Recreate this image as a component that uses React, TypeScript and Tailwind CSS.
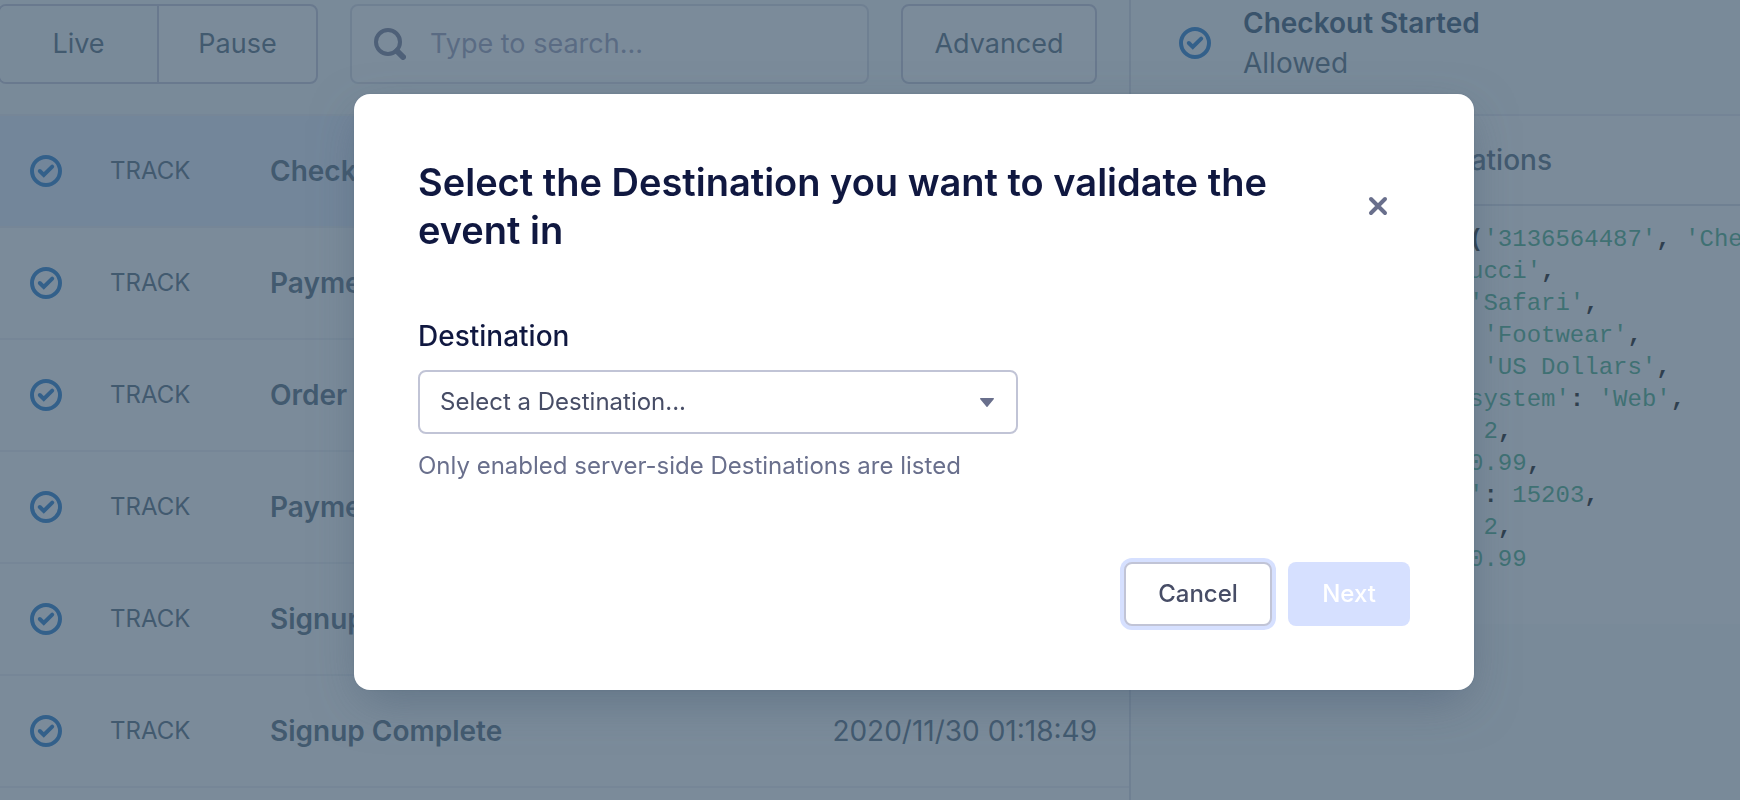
import React, { useState } from 'react';

interface TrackEvent {
  id: number;
  name: string;
  time: string;
}

const EVENTS: TrackEvent[] = [
  { id: 1, name: 'Checkout Started', time: '2020/11/30 01:18:54' },
  { id: 2, name: 'Payment Info Entered', time: '2020/11/30 01:18:53' },
  { id: 3, name: 'Order Completed', time: '2020/11/30 01:18:52' },
  { id: 4, name: 'Payment Info Entered', time: '2020/11/30 01:18:51' },
  { id: 5, name: 'Signup Started', time: '2020/11/30 01:18:50' },
  { id: 6, name: 'Signup Complete', time: '2020/11/30 01:18:49' },
];

const CODE = `analytics.track('3136564487', 'Checkout Started', {
      brand: 'Gucci',
      browser: 'Safari',
      category: 'Footwear',
      currency: 'US Dollars',
      'browser system': 'Web',
      quantity: 2,
      price: 190.99,
      'zip code': 15203,
      discount: 2,
      total: 190.99
});`;

// Splits the snippet into strings, numbers and everything else
const tokenize = (code: string) => code.split(/('[^']*'|\b\d+(?:\.\d+)?\b)/g);

const CheckIcon: React.FC = () => (
  <svg viewBox="0 0 32 32" className="w-8 h-8 shrink-0 text-[#1070ca]" fill="none" stroke="currentColor">
    <circle cx="16" cy="16" r="14" strokeWidth="4" />
    <path d="M9.8 16l4 4 8.400-8.400" strokeWidth="4" strokeLinecap="round" />
  </svg>
);

const SearchIcon: React.FC = () => (
  <svg viewBox="0 0 32 32" className="w-8 h-8 shrink-0 text-[#696f8c]" fill="none" stroke="currentColor">
    <circle cx="14" cy="14" r="12" strokeWidth="4" />
    <path d="M23 23l6 6" strokeWidth="6" strokeLinecap="round" />
  </svg>
);

const CloseIcon: React.FC = () => (
  <svg viewBox="0 0 20 20" className="w-5 h-5" fill="none" stroke="currentColor" strokeWidth="4" strokeLinecap="round">
    <path d="M3 3l14 14M17 3l-14 14" />
  </svg>
);

const Toolbar: React.FC = () => {
  const [query, setQuery] = useState('');

  return (
    <div className="flex gap-8 h-[116px] pt-1 pr-8 border-b-2 border-[#edeff5] bg-[#f9fafc] text-[27px] text-[#425a70]">
      <div className="flex w-80 h-20 -ml-[2px] rounded-lg border-2 border-[#c1c4d6] bg-white overflow-hidden">
        <button type="button" className="flex-1 bg-[#f9fafc] border-r-2 border-[#c1c4d6]">
          Live
        </button>
        <button type="button" className="flex-1">
          Pause
        </button>
      </div>
      <label className="flex flex-1 items-center gap-6 h-20 px-[22px] rounded-lg border-2 border-[#d8dae5] bg-white">
        <SearchIcon />
        <input
          type="text"
          aria-label="Search events"
          value={query}
          onChange={(e) => setQuery(e.target.value)}
          placeholder="Type to search..."
          className="w-full min-w-0 bg-transparent outline-none placeholder:text-[#8f95b2]"
        />
      </label>
      <button type="button" className="w-49 h-20 rounded-lg border-2 border-[#c1c4d6] bg-white">
        Advanced
      </button>
    </div>
  );
};

const EventRow: React.FC<{ event: TrackEvent; selected: boolean; onSelect: () => void }> = ({
  event,
  selected,
  onSelect,
}) => (
  <li className={selected ? 'bg-[#e4edff]' : 'bg-white'}>
    <button
      type="button"
      onClick={onSelect}
      className="flex items-center w-full h-28 pl-[30px] pr-8 border-b-2 border-[#edeff5] text-left text-[#425a70]"
    >
      <CheckIcon />
      <span className="w-40 ml-12 shrink-0 text-2xl">TRACK</span>
      <span className="flex-1 text-[28px] font-semibold">{event.name}</span>
      <span className="text-[28px]">{event.time}</span>
    </button>
  </li>
);

const EventDetail: React.FC<{ name: string }> = ({ name }) => (
  <section className="flex-1 min-w-0 bg-[#f9fafc] text-[#425a70]">
    <div className="flex items-center gap-8 h-[116px] pl-12 pb-7 border-b-2 border-[#e6e8f0]">
      <CheckIcon />
      <div className="text-[28px] leading-10">
        <h2 className="font-semibold text-[#234361]">{name}</h2>
        <p>Allowed</p>
      </div>
    </div>
    <div className="flex items-center gap-12 h-[90px] pl-14 border-b-2 border-[#d8dae5] bg-white text-[28px] font-medium">
      <button type="button">Raw</button>
      <button type="button">Pretty</button>
      <button type="button">Violations</button>
    </div>
    <pre className="pt-[18px] pb-4 pl-[122px] overflow-hidden bg-white font-['Liberation_Mono',monospace] text-2xl leading-8 text-black">
      {tokenize(CODE).map((token, i) => (
        <span key={i} className={i % 2 ? 'text-[#37a77d]' : 'font-bold'}>
          {token}
        </span>
      ))}
    </pre>
  </section>
);

const DestinationDialog: React.FC<{ onClose: () => void }> = ({ onClose }) => {
  const [destination, setDestination] = useState('');

  return (
    <div
      role="dialog"
      aria-modal="true"
      aria-labelledby="dialog-title"
      className="w-[1120px] max-w-full p-16 rounded-2xl bg-white shadow-[0_16px_48px_-8px_rgba(67,90,111,0.5),0_0_2px_rgba(67,90,111,0.3)]"
    >
      <div className="flex items-center justify-between">
        <h1 id="dialog-title" className="text-[38px] leading-12 font-semibold text-[#101840]">
          Select the Destination you want to validate the event in
        </h1>
        <button
          type="button"
          aria-label="Close"
          onClick={onClose}
          className="flex items-center justify-center w-16 h-16 shrink-0 text-[#696f8c]"
        >
          <CloseIcon />
        </button>
      </div>

      <div className="mt-[62px]">
        <label htmlFor="destination" className="block text-[28px] leading-10 font-medium text-[#101840]">
          Destination
        </label>
        <div className="relative w-[600px] max-w-full mt-[14px]">
          <select
            id="destination"
            value={destination}
            onChange={(e) => setDestination(e.target.value)}
            className="block w-full h-16 pl-5 pr-16 appearance-none rounded-lg border-2 border-[#c1c4d6] bg-white text-2xl text-[#474d66]"
          >
            <option value="">Select a Destination...</option>
          </select>
          <svg viewBox="0 0 14 9" className="absolute right-6 top-7 w-[14px] h-[9px] pointer-events-none" fill="#696f8c">
            <path d="M.8 0h12.400c.8 0 1.100.8.500 1.300L7.500 8.700c-.3.300-.7.300-1 0L.3 1.300C-.3.800 0 0 .8 0z" />
          </svg>
        </div>
        <p className="mt-4 text-2xl leading-8 text-[#696f8c]">
          Only enabled server-side Destinations are listed
        </p>
      </div>

      <div className="flex justify-end gap-4 mt-20 text-2xl font-medium">
        <button
          type="button"
          onClick={onClose}
          className="w-37 h-16 rounded-lg border-2 border-[#c1c4d6] bg-white text-[#474d66] ring-4 ring-[#d6e0ff]"
        >
          Cancel
        </button>
        <button type="button" disabled={!destination} className="w-[122px] h-16 rounded-lg bg-[#d6e0ff] text-white">
          Next
        </button>
      </div>
    </div>
  );
};

export default function App() {
  const [selectedId, setSelectedId] = useState(1);
  const [isDialogOpen, setIsDialogOpen] = useState(true);
  const selected = EVENTS.find((event) => event.id === selectedId) || EVENTS[0];

  return (
    <div className="h-screen overflow-hidden font-['Inter','Liberation_Sans',sans-serif]">
      <main className="flex h-full">
        <section className="w-[65%] shrink-0 border-r-2 border-[#d8dae5]">
          <Toolbar />
          <ul>
            {EVENTS.map((event) => (
              <EventRow
                key={event.id}
                event={event}
                selected={event.id === selectedId}
                onSelect={() => setSelectedId(event.id)}
              />
            ))}
          </ul>
        </section>
        <EventDetail name={selected.name} />
      </main>

      {/* Overlay */}
      {isDialogOpen && (
        <div className="fixed inset-0 flex items-start justify-center pt-[94px] pl-[88px] bg-[rgba(67,90,111,0.7)]">
          <DestinationDialog onClose={() => setIsDialogOpen(false)} />
        </div>
      )}
    </div>
  );
}
